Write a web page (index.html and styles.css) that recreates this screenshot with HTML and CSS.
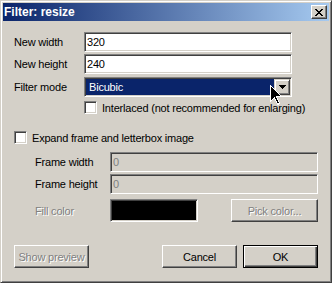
FILE: index.html
```html
<!DOCTYPE html>
<html>
<head>
<meta charset="utf-8">
<title>Filter: resize</title>
<link rel="stylesheet" href="styles.css">
</head>
<body>
<div class="window">
  <div class="titlebar">
    <span class="title">Filter: resize</span>
    <div class="tbtn">
      <svg width="8" height="7" viewBox="0 0 8 7" shape-rendering="crispEdges"><path d="M0 0h2v1H0zM6 0h2v1H6zM1 1h2v1H1zM5 1h2v1H5zM2 2h4v1H2zM3 3h2v1H3zM2 4h4v1H2zM1 5h2v1H1zM5 5h2v1H5zM0 6h2v1H0zM6 6h2v1H6z" fill="#000"/></svg>
    </div>
  </div>
  <div class="content">
    <div class="row">
      <span class="lbl">New width</span>
      <div class="edit">320</div>
    </div>
    <div class="row r2">
      <span class="lbl">New height</span>
      <div class="edit">240</div>
    </div>
    <div class="row r3">
      <span class="lbl">Filter mode</span>
      <div class="combo">
        <span class="combo-val">Bicubic</span>
        <span class="combo-btn">
          <svg width="7" height="4" viewBox="0 0 7 4" shape-rendering="crispEdges"><path d="M0 0h7v1H0zM1 1h5v1H1zM2 2h3v1H2zM3 3h1v1H3z" fill="#000"/></svg>
        </span>
      </div>
    </div>
    <div class="chkrow interlaced">
      <span class="chk"></span>
      <span>Interlaced (not recommended for enlarging)</span>
    </div>
    <div class="chkrow expand">
      <span class="chk"></span>
      <span>Expand frame and letterbox image</span>
    </div>
    <div class="row sub fw">
      <span class="lbl2">Frame width</span>
      <div class="edit disabled">0</div>
    </div>
    <div class="row sub fh">
      <span class="lbl2">Frame height</span>
      <div class="edit disabled">0</div>
    </div>
    <div class="row sub fill">
      <span class="lbl2 dis">Fill color</span>
      <div class="swatch"></div>
      <div class="btn dis pick">Pick color...</div>
    </div>
    <div class="buttons">
      <div class="btn dis preview">Show preview</div>
      <div class="btn cancel">Cancel</div>
      <div class="btn default ok">OK</div>
    </div>
  </div>
  <svg class="cursor" width="14" height="21" viewBox="0 0 14 21" shape-rendering="crispEdges">
    <path d="M0.5 0.5V16.5L4.5 12.5L7.5 19.5L9.5 18.5L6.5 11.5H11.5Z" fill="#000" stroke="#fff" stroke-width="1"/>
  </svg>
</div>
</body>
</html>
```

FILE: styles.css
```css
html, body {
  margin: 0;
  padding: 0;
  background: #d4d0c8;
}

body {
  font-family: "Liberation Sans", Arial, sans-serif;
  font-size: 11px;
  letter-spacing: -0.2px;
  color: #000;
}

.window {
  position: relative;
  width: 332px;
  height: 283px;
  box-sizing: border-box;
  background: #d4d0c8;
  border: 1px solid;
  border-color: #d4d0c8 #404040 #404040 #d4d0c8;
  box-shadow: inset 1px 1px #fff, inset -1px -1px #808080;
  padding: 2px;
  display: flex;
  flex-direction: column;
}

.titlebar {
  height: 18px;
  display: flex;
  align-items: center;
  justify-content: space-between;
  background: linear-gradient(to right, #0a246a, #a6caf0);
  padding-left: 1px;
  padding-right: 2px;
}

.title {
  color: #fff;
  font-weight: bold;
  font-size: 12px;
  letter-spacing: 0;
  line-height: 18px;
}

.tbtn {
  width: 16px;
  height: 14px;
  box-sizing: border-box;
  background: #d4d0c8;
  border: 1px solid;
  border-color: #fff #404040 #404040 #fff;
  box-shadow: inset -1px -1px #808080;
  display: flex;
  align-items: center;
  justify-content: center;
  padding-right: 1px;
}

.tbtn svg {
  display: block;
}

.content {
  padding: 11px 11px 0 11px;
  display: flex;
  flex-direction: column;
}

.row {
  display: flex;
  align-items: center;
}

.r2 { margin-top: 2px; }
.r3 { margin-top: 3px; }

.lbl {
  width: 70px;
  flex: none;
}

.lbl2 {
  width: 75px;
  margin-left: 21px;
  flex: none;
}

.dis {
  color: #808080;
  text-shadow: 1px 1px 0 #fff;
}

.edit {
  width: 208px;
  height: 20px;
  box-sizing: border-box;
  background: #fff;
  border: 1px solid;
  border-color: #808080 #fff #fff #808080;
  box-shadow: inset 1px 1px #404040, inset -1px -1px #d4d0c8;
  padding: 1px 2px;
  line-height: 17px;
}

.edit.disabled {
  background: #d4d0c8;
  color: #808080;
}

.combo {
  width: 208px;
  height: 20px;
  box-sizing: border-box;
  border: 1px solid;
  border-color: #808080 #fff #fff #808080;
  box-shadow: inset 1px 1px #404040, inset -1px -1px #d4d0c8;
  padding: 1px;
  display: flex;
  background: #fff;
}

.combo-val {
  flex: 1;
  background: #0a246a;
  color: #fff;
  padding-left: 3px;
  line-height: 16px;
}

.combo-btn {
  width: 16px;
  height: 16px;
  box-sizing: border-box;
  background: #d4d0c8;
  border: 1px solid;
  border-color: #d4d0c8 #404040 #404040 #d4d0c8;
  box-shadow: inset 1px 1px #fff, inset -1px -1px #808080;
  display: flex;
  align-items: center;
  justify-content: center;
}

.combo-btn svg {
  display: block;
}

.chkrow {
  display: flex;
  align-items: center;
  gap: 5px;
  height: 13px;
}

.interlaced {
  margin-top: 4px;
  margin-left: 70px;
}

.expand {
  margin-top: 17px;
}

.chk {
  width: 13px;
  height: 13px;
  box-sizing: border-box;
  flex: none;
  background: #fff;
  border: 1px solid;
  border-color: #808080 #fff #fff #808080;
  box-shadow: inset 1px 1px #404040, inset -1px -1px #d4d0c8;
}

.fw { margin-top: 8px; }
.fh { margin-top: 2px; }
.fill { margin-top: 5px; }

.swatch {
  width: 88px;
  height: 23px;
  box-sizing: border-box;
  background: #000;
  border: 1px solid;
  border-color: #808080 #fff #fff #808080;
  box-shadow: inset 1px 1px #404040, inset -1px -1px #d4d0c8;
}

.btn {
  height: 23px;
  box-sizing: border-box;
  background: #d4d0c8;
  border: 1px solid;
  border-color: #fff #404040 #404040 #fff;
  box-shadow: inset -1px -1px #808080;
  display: flex;
  align-items: center;
  justify-content: center;
  width: 75px;
}

.pick {
  width: 87px;
  margin-left: 33px;
}

.buttons {
  margin-top: 23px;
  display: flex;
  align-items: center;
}

.cancel {
  margin-left: auto;
}

.ok {
  margin-left: 6px;
}

.btn.default {
  border-color: #000;
  box-shadow: inset 1px 1px #fff, inset -1px -1px #404040, inset -2px -2px #808080;
}

.cursor {
  position: absolute;
  left: 269px;
  top: 84px;
}
```
